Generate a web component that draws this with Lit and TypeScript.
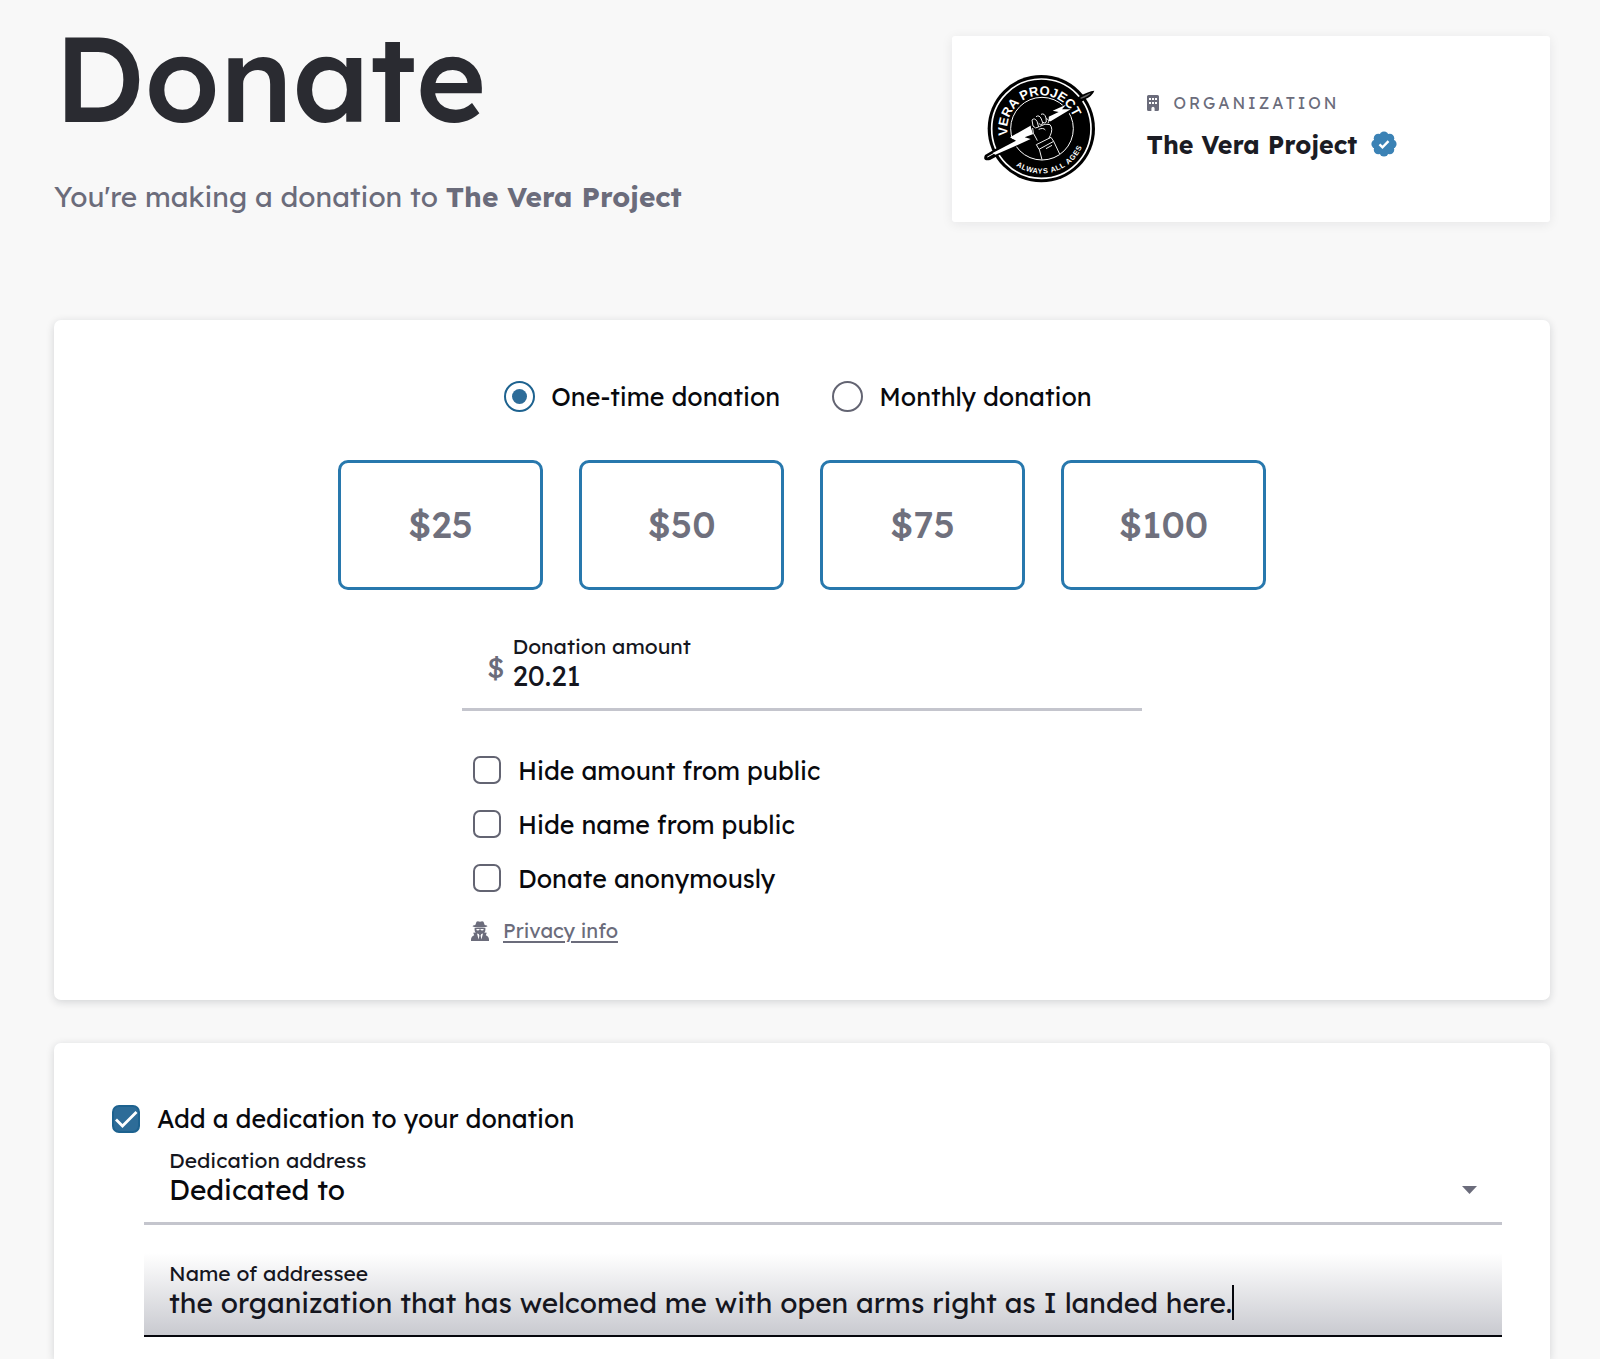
import { LitElement, html, css, svg } from 'lit';
import { customElement, state } from 'lit/decorators.js';

const AMOUNTS = [25, 50, 75, 100];

const PRIVACY_OPTIONS = [
  { id: 'hide-amount', label: 'Hide amount from public' },
  { id: 'hide-name', label: 'Hide name from public' },
  { id: 'anonymous', label: 'Donate anonymously' },
];

const BADGE_LOBES = Array.from({ length: 8 }, (_, i) => {
  const angle = (i * Math.PI) / 4;
  return { cx: 13 + 8 * Math.cos(angle), cy: 13 + 8 * Math.sin(angle) };
});

@customElement('vera-logo')
class VeraLogo extends LitElement {
  static styles = css`
    :host {
      display: block;
      flex: none;
    }
    svg {
      display: block;
      width: 112px;
      height: 110px;
    }
    text {
      font-family: 'Liberation Sans', Arial, sans-serif;
      font-weight: 700;
      fill: #fff;
    }
    .name {
      font-size: 39px;
    }
    .motto {
      font-size: 22px;
      letter-spacing: 2px;
    }
  `;

  render() {
    return html`
      <svg viewBox="69 42 336 330" role="img" aria-label="Vera Project, always all ages">
        <defs>
          <path id="top-arc" d="M143 226 A103 103 0 0 1 345 186" />
          <path id="bottom-arc" d="M168 317 A134 134 0 0 0 378 208" />
        </defs>
        <circle cx="244" cy="206" r="161" fill="#000" />
        <circle cx="244" cy="206" r="149" fill="none" stroke="#fff" stroke-width="5" />
        <circle cx="246" cy="206" r="94" fill="none" stroke="#fff" stroke-width="3" />
        <path
          d="M75 285 L152 240 L225 198 L290 140 L318 134 L360 108 Q385 94 403 92 Q398 108 374 118 L330 158 L206 244 L150 268 L90 300 Q66 304 75 285Z"
          fill="#000"
        />
        <path d="M360 114 L392 98 Q388 108 364 116Z" fill="#666" />
        <path d="M82 291 L104 279" stroke="#fff" stroke-width="3" />
        <path
          d="M98 279 L168 242 L150 232 L214 196 L226 220 L194 232 L212 237 L166 258 L106 284Z"
          fill="#fff"
        />
        <path
          d="M262 184 L266 170 L296 156 L278 152 L318 134 L306 148 L332 148 L272 184Z"
          fill="#fff"
        />
        <path
          d="M222 232 L213 203 Q206 181 222 176 Q226 162 239 163 Q250 153 258 164 Q268 164 266 182 Q282 196 276 210 Q274 226 264 234 L222 240Z"
          fill="#000"
        />
        <g fill="none" stroke="#eee" stroke-width="3">
          <path d="M216 180 Q224 172 231 184 L236 201 Q226 208 219 198Z" />
          <path d="M228 170 Q238 163 244 177 L249 191 Q241 198 236 190" />
          <path d="M243 163 Q254 158 258 174 L259 186 Q252 192 248 186" />
          <path d="M258 176 Q270 178 264 190 M238 200 Q256 188 270 194 Q280 206 271 226 L266 236" />
          <path d="M218 204 Q217 220 228 234 L232 242 M236 208 Q250 202 256 210" />
          <path d="M229 254 L273 232 L281 244 L237 268Z M238 268 L246 299 M281 244 L299 282 M258 266 L276 256" />
        </g>
        <text class="name"><textPath href="#top-arc">VERA PROJECT</textPath></text>
        <text class="motto"><textPath href="#bottom-arc">ALWAYS ALL AGES</textPath></text>
      </svg>
    `;
  }
}

@customElement('app-root')
class AppRoot extends LitElement {
  static styles = css`
    :host {
      display: block;
      background: #f8f8f8;
      color: #15161e;
      font-family: Lexend, Inter, 'Open Sans', sans-serif;
      font-size: 25px;
    }
    * {
      box-sizing: border-box;
    }
    .page {
      display: flex;
      flex-direction: column;
      min-height: 100vh;
      padding: 17px 50px 0 54px;
    }
    .header {
      display: flex;
      justify-content: space-between;
      align-items: flex-start;
      gap: 40px;
      margin-bottom: 98px;
    }
    .title {
      margin: 0 0 42px;
      font-size: 120px;
      line-height: 120px;
      font-weight: 500;
      color: #2a2b31;
    }
    .subtitle {
      margin: 0;
      font-size: 28px;
      line-height: 36px;
      color: #6b6c7b;
    }
    .organization {
      display: flex;
      align-items: center;
      gap: 52px;
      width: 40%;
      min-height: 186px;
      margin-top: 19px;
      padding: 0 31px;
      background: #fff;
      border-radius: 3px;
      box-shadow: 0 2px 12px rgba(20, 24, 40, 0.08);
    }
    .org-kind {
      display: flex;
      align-items: center;
      gap: 15px;
      margin: 0 0 10px;
      font-size: 16px;
      line-height: 20px;
      letter-spacing: 3px;
      color: #6b6c7b;
    }
    .org-name {
      display: flex;
      align-items: center;
      gap: 14px;
      margin: 0;
      font-size: 25px;
      line-height: 43px;
      font-weight: 700;
      color: #1b1c24;
    }
    svg {
      display: block;
      flex: none;
    }
    .card {
      background: #fff;
      border-radius: 7px;
      box-shadow: 0 2px 8px rgba(20, 24, 40, 0.16);
    }
    .amount-card {
      margin-bottom: 43px;
      padding: 56px 40px 57px;
    }
    .dedication-card {
      flex: 1;
      padding: 54px 48px 22px 58px;
      border-radius: 7px 7px 0 0;
    }
    .frequency {
      display: flex;
      justify-content: center;
      gap: 52px;
      margin: 0 0 44px;
      padding: 0 8px 0 0;
      border: 0;
    }
    .choice {
      display: flex;
      align-items: center;
      color: #08090d;
    }
    .frequency .choice {
      gap: 16px;
      height: 40px;
    }
    .radio,
    .checkbox {
      appearance: none;
      flex: none;
      margin: 0;
      background: #fff;
      border: 2px solid #636472;
    }
    .radio {
      display: grid;
      place-items: center;
      width: 31px;
      height: 31px;
      border-radius: 50%;
    }
    .radio:checked {
      border-color: #1d628f;
    }
    .radio:checked::before {
      content: '';
      width: 15px;
      height: 15px;
      border-radius: 50%;
      background: #2d6c98;
    }
    .checkbox {
      width: 28px;
      height: 28px;
      border-radius: 7px;
    }
    .checkbox:checked {
      border-color: #1d628f;
      background: #2d6c98;
    }
    .check-box {
      display: grid;
      flex: none;
    }
    .check-box > * {
      grid-area: 1 / 1;
    }
    .check-mark {
      pointer-events: none;
    }
    .presets {
      display: flex;
      justify-content: center;
      gap: 36px;
      margin-bottom: 36px;
    }
    .preset {
      width: 205px;
      height: 130px;
      padding: 0 0 2px;
      background: #fff;
      border: 3px solid #2878ad;
      border-radius: 10px;
      font: 500 37px/46px Lexend, Inter, 'Open Sans', sans-serif;
      color: #6f707d;
    }
    .amount-form {
      max-width: 680px;
      margin: 0 auto;
    }
    .field {
      display: flex;
      align-items: center;
      gap: 8px;
      padding: 8px 25px 15px;
      border-bottom: 3px solid #c4c5cd;
    }
    .field-body {
      flex: 1;
      min-width: 0;
    }
    .field-label {
      display: block;
      font-size: 21px;
      line-height: 24px;
    }
    .currency {
      padding-top: 8px;
      font-size: 28px;
      line-height: 35px;
      color: #6b6c7b;
    }
    .field-input {
      display: block;
      width: 100%;
      height: 35px;
      padding: 0;
      border: 0;
      outline: 0;
      background: transparent;
      font: 400 28px/35px Lexend, Inter, 'Open Sans', sans-serif;
      color: inherit;
    }
    .options {
      margin: 32px 0 13px;
    }
    .options .choice {
      gap: 17px;
      height: 54px;
      padding-left: 11px;
    }
    .privacy {
      display: flex;
      align-items: center;
      gap: 14px;
      padding-left: 9px;
      font-size: 20px;
      line-height: 25px;
    }
    .privacy-link {
      color: #6b6c7b;
      text-underline-offset: 3px;
    }
    .dedication-toggle {
      gap: 17px;
      height: 43px;
    }
    .dedication-fields {
      display: flex;
      flex-direction: column;
      gap: 28px;
      padding-left: 32px;
    }
    .select-row {
      display: flex;
      align-items: center;
    }
    .select {
      appearance: none;
      flex: 1;
      min-width: 0;
      color: #08090d;
    }
    .focused {
      border-bottom-color: #05060c;
      border-bottom-width: 2px;
      background: linear-gradient(#fff, #c9cad0);
    }
    .addressee {
      field-sizing: content;
      width: auto;
      max-width: 100%;
      border-right: 2px solid #05060c;
      caret-color: transparent;
    }
  `;

  @state() private frequency = 'once';
  @state() private amount = '20.21';
  @state() private dedicated = true;

  private renderRadio(value: string, label: string) {
    return html`
      <label class="choice">
        <input
          class="radio"
          type="radio"
          name="frequency"
          .checked=${this.frequency === value}
          @change=${() => (this.frequency = value)}
        />
        ${label}
      </label>
    `;
  }

  private renderHeader() {
    return html`
      <header class="header">
        <div>
          <h1 class="title">Donate</h1>
          <p class="subtitle">You're making a donation to <strong>The Vera Project</strong></p>
        </div>
        <section class="organization">
          <vera-logo></vera-logo>
          <div>
            <p class="org-kind">
              <svg width="12" height="16" viewBox="0 0 12 16" fill="currentColor" aria-hidden="true">
                <path
                  fill-rule="evenodd"
                  d="M1.5 0h9A1.5 1.5 0 0 1 12 1.5v13a1.5 1.5 0 0 1-1.5 1.5H7.6v-2.6a1.6 1.6 0 0 0-3.2 0V16H1.5A1.5 1.5 0 0 1 0 14.500v-13A1.5 1.5 0 0 1 1.5 0zM2 3v2h2V3zm3 0v2h2V3zm3 0v2h2V3zM2 7v2h2V7zm3 0v2h2V7zm3 0v2h2V7z"
                />
              </svg>
              ORGANIZATION
            </p>
            <h2 class="org-name">
              The Vera Project
              <svg width="26" height="26" viewBox="0 0 26 26" role="img" aria-label="Verified">
                <g fill="#3b82b5">
                  <circle cx="13" cy="13" r="10" />
                  ${BADGE_LOBES.map((l) => svg`<circle cx=${l.cx} cy=${l.cy} r="4.600" />`)}
                </g>
                <path d="M8.500 13.300l3 3 6-6.200" fill="none" stroke="#fff" stroke-width="2.400" />
              </svg>
            </h2>
          </div>
        </section>
      </header>
    `;
  }

  private renderAmountCard() {
    return html`
      <section class="card amount-card">
        <fieldset class="frequency" aria-label="Donation frequency">
          ${this.renderRadio('once', 'One-time donation')}
          ${this.renderRadio('monthly', 'Monthly donation')}
        </fieldset>
        <div class="presets">
          ${AMOUNTS.map(
            (n) => html`
              <button class="preset" type="button" @click=${() => (this.amount = `${n}.00`)}>$${n}</button>
            `,
          )}
        </div>
        <div class="amount-form">
          <div class="field">
            <span class="currency">$</span>
            <div class="field-body">
              <label class="field-label" for="amount">Donation amount</label>
              <input class="field-input" id="amount" type="text" inputmode="decimal" .value=${this.amount} />
            </div>
          </div>
          <div class="options">
            ${PRIVACY_OPTIONS.map(
              (o) => html`
                <label class="choice"><input class="checkbox" type="checkbox" name=${o.id} />${o.label}</label>
              `,
            )}
          </div>
          <div class="privacy">
            <svg width="18" height="20" viewBox="0 0 18 20" fill="#6b6c7b" aria-hidden="true">
              <path d="M5.500 0.700Q6.500-0.300 9 0.700Q11.500-0.300 12.500 0.700L13.700 4Q16.500 4.500 16.500 5.300Q15 6.600 9 6.600Q3 6.600 1.500 5.300Q1.500 4.500 4.300 4z" />
              <path
                fill-rule="evenodd"
                d="M3.600 7h10.800v2q0 1.500-1.200 2.500l2.600 0.200-1 2.500q3.200 1 3.200 4.600V20H0v-1.200q0-3.600 3.200-4.600l-1-2.500 2.600-0.200Q3.600 10.500 3.600 9zM5.300 7.900q0 1.500 1.600 1.500 1.400 0 1.600-1.200h1q.2 1.200 1.600 1.200 1.600 0 1.600-1.500zM6 12.500L7.600 18.600 8.400 14.500 7.700 13zM12 12.500L10.400 18.600 9.600 14.500 10.300 13z"
              />
            </svg>
            <a class="privacy-link" href="#privacy">Privacy info</a>
          </div>
        </div>
      </section>
    `;
  }

  private renderDedicationFields() {
    return html`
      <div class="dedication-fields">
        <div class="field">
          <div class="field-body">
            <label class="field-label" for="dedication">Dedication address</label>
            <div class="select-row">
              <select class="field-input select" id="dedication">
                <option>Dedicated to</option>
              </select>
              <svg width="15" height="8" viewBox="0 0 15 8" aria-hidden="true">
                <path d="M0 0h15L7.500 8z" fill="#6b6c7b" />
              </svg>
            </div>
          </div>
        </div>
        <div class="field focused">
          <div class="field-body">
            <label class="field-label" for="addressee">Name of addressee</label>
            <input
              class="field-input addressee"
              id="addressee"
              type="text"
              value="the organization that has welcomed me with open arms right as I landed here."
            />
          </div>
        </div>
      </div>
    `;
  }

  render() {
    return html`
      <main class="page">
        ${this.renderHeader()} ${this.renderAmountCard()}
        <section class="card dedication-card">
          <label class="choice dedication-toggle">
            <span class="check-box">
              <input
                class="checkbox"
                type="checkbox"
                .checked=${this.dedicated}
                @change=${() => (this.dedicated = !this.dedicated)}
              />
              <svg class="check-mark" width="28" height="28" viewBox="0 0 28 28" aria-hidden="true">
                <path d="M4 14.500l6.500 6.500L24.500 7" fill="none" stroke="#fff" stroke-width="2.800" />
              </svg>
            </span>
            Add a dedication to your donation
          </label>
          ${this.dedicated ? this.renderDedicationFields() : ''}
        </section>
      </main>
    `;
  }
}
